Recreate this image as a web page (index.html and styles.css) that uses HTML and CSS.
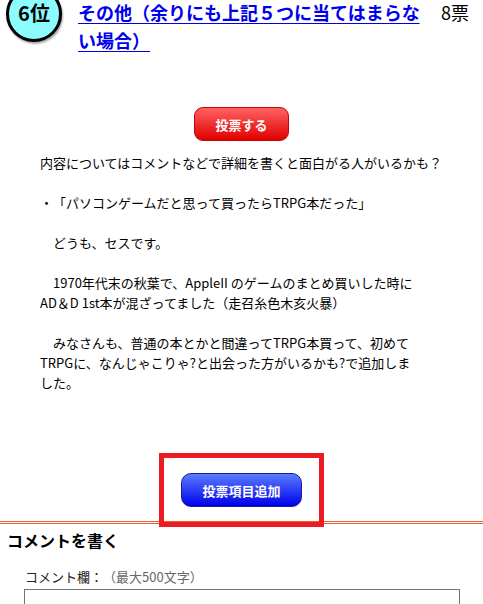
FILE: index.html
```html
<!DOCTYPE html>
<html lang="ja">
<head>
    <meta charset="utf-8">
    <meta name="viewport" content="width=device-width, initial-scale=1.0">
    <title>投票項目</title>
    <link rel="stylesheet" href="styles.css">
</head>
<body>
    <div id="rankRow">
        <div class="rank-badge">6位</div>
        <a class="item-title" href="#">その他（余りにも上記５つに当てはまらない場合）</a>
        <div class="item-votes">8票</div>
    </div>

    <div class="vote-area">
        <button class="vote-button">投票する</button>
    </div>

    <div class="description">
        <p>内容についてはコメントなどで詳細を書くと面白がる人がいるかも？</p>
        <p>・「パソコンゲームだと思って買ったらTRPG本だった」</p>
        <p>　どうも、セスです。</p>
        <p>　1970年代末の秋葉で、AppleII のゲームのまとめ買いした時に<br>AD＆D 1st本が混ざってました（走召糸色木亥火暴）</p>
        <p>　みなさんも、普通の本とかと間違ってTRPG本買って、初めて<br>TRPGに、なんじゃこりゃ?と出会った方がいるかも?で追加しま<br>した。</p>
    </div>

    <div class="add-area">
        <div class="add-wrap">
            <button class="add-button">投票項目追加</button>
            <div class="highlight"></div>
        </div>
    </div>

    <div id="commentSection">
        <h2 class="comment-heading">コメントを書く</h2>
        <div class="comment-form">
            <div class="label">コメント欄：<span class="label-note">（最大500文字）</span></div>
            <textarea class="comment-box"></textarea>
        </div>
    </div>
</body>
</html>
```

FILE: styles.css
```css
body {
    margin: 0;
    padding: 0;
    background-color: #fff;
    color: #000;
    font-family: "Noto Sans CJK JP", "Noto Sans", sans-serif;
    text-spacing-trim: space-all;
    overflow: hidden;
}

#rankRow {
    display: flex;
    align-items: flex-start;
    margin-top: -14px;
    padding-left: 6px;
}

.rank-badge {
    flex: 0 0 auto;
    box-sizing: content-box;
    width: 50px;
    height: 48px;
    padding-bottom: 2px;
    border: 3px solid #000;
    border-radius: 50%;
    background-color: #8cfcff;
    box-shadow: 1px 2px 2px rgba(0, 0, 0, 0.35);
    display: flex;
    align-items: center;
    justify-content: center;
    font-size: 20px;
    font-weight: bold;
    line-height: 1;
}

.item-title {
    flex: 0 0 350px;
    margin-left: 16px;
    padding-top: 12px;
    font-size: 18px;
    font-weight: bold;
    line-height: 28px;
    color: #0000ee;
    text-decoration: underline;
    text-underline-offset: 3px;
}

.item-votes {
    margin-left: 13px;
    padding-top: 12px;
    font-size: 18px;
    line-height: 28px;
}

.vote-area {
    display: flex;
    justify-content: center;
    margin-top: 53px;
}

.vote-button {
    width: 95px;
    height: 34px;
    border: 1px solid #c80000;
    border-radius: 9px;
    background: linear-gradient(#ff6262, #e00000);
    color: #fff;
    font-family: inherit;
    font-size: 13px;
    font-weight: bold;
    cursor: pointer;
}

.description {
    margin-top: 12px;
    padding-left: 40px;
    font-size: 13px;
    line-height: 20px;
    white-space: nowrap;
}

.description p {
    margin: 0 0 20px 0;
}

.description p:last-child {
    margin-bottom: 0;
}

.add-area {
    display: flex;
    justify-content: center;
    margin-top: 80px;
}

.add-wrap {
    position: relative;
}

.add-button {
    display: block;
    width: 121px;
    height: 34px;
    border: 1px solid #1a1a9a;
    border-radius: 10px;
    background: linear-gradient(#5a7cff, #0000ea);
    color: #fff;
    font-family: inherit;
    font-size: 13px;
    font-weight: bold;
    cursor: pointer;
}

/* annotation box drawn over the button */
.highlight {
    position: absolute;
    left: -22px;
    top: -20px;
    width: 155px;
    height: 64px;
    border: 5px solid #ec1c24;
    z-index: 2;
}

#commentSection {
    margin-top: 14px;
    border-top: 3px double #e8602c;
}

.comment-heading {
    margin: 4px 0 0 7px;
    font-size: 16px;
    font-weight: bold;
    line-height: 24px;
}

.comment-form {
    padding-left: 24px;
    margin-top: 16px;
}

.label {
    padding-left: 1px;
    font-size: 13px;
    line-height: 18px;
    color: #222;
}

.label-note {
    color: #666;
}

.comment-box {
    display: block;
    box-sizing: border-box;
    width: 436px;
    height: 80px;
    margin-top: 3px;
    border: 1px solid #767676;
}
```
